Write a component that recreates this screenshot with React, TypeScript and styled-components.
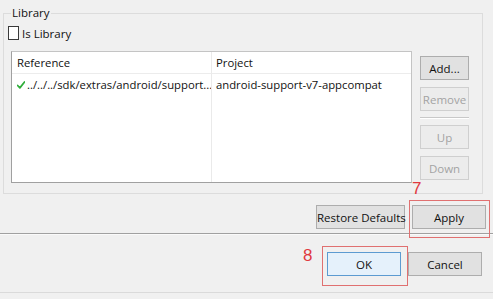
import React from "react";
import styled, { createGlobalStyle } from "styled-components";

const Global = createGlobalStyle`
  html, body { margin: 0; padding: 0; background: #f0f0f0; }
  body { font-family: "Open Sans", "Noto Sans", sans-serif; }
`;

const Window = styled.div`
  width: 493px;
  height: 299px;
  background: #f0f0f0;
  display: flex;
  flex-direction: column;
  overflow: hidden;
  font-family: "Open Sans", "Noto Sans", sans-serif;
  font-size: 11.3px;
  color: #111;
`;

const Group = styled.fieldset`
  margin: 5px 10px 0 3px;
  padding: 0 12px 0 4px;
  border: 1px solid #dcdcdc;
  height: 189px;
  box-sizing: border-box;
  min-width: 0;
  display: flex;
  flex-direction: column;
`;

const Legend = styled.legend`
  padding: 0 1px;
  margin-left: 3px;
  line-height: 16px;
  font-size: 11.5px;
`;

const CheckRow = styled.label`
  display: flex;
  align-items: center;
  gap: 3px;
  height: 16px;
  margin-top: 4px;
  font-size: 11.5px;
`;

const CheckBox = styled.span`
  display: inline-block;
  width: 9px;
  height: 12px;
  border: 1px solid #3a3a3a;
  background: #fff;
`;

const Content = styled.div`
  display: flex;
  gap: 8px;
  margin-top: 10px;
  margin-left: 3px;
`;

const Table = styled.div`
  width: 401px;
  height: 132px;
  box-sizing: border-box;
  background: #fff;
  border: 1px solid #a0a0a0;
  border-top-color: #c4c4c4;
  border-right-color: #c4c4c4;
  display: grid;
  grid-template-columns: 200px 1fr;
  grid-template-rows: 22px 21px 1fr;
`;

const Cell = styled.div<{ $header?: boolean; $first?: boolean }>`
  display: flex;
  align-items: center;
  gap: 2px;
  padding-left: ${(p) => (p.$first ? "5px" : "4px")};
  white-space: nowrap;
  overflow: hidden;
  font-size: 11.3px;
  border-right: ${(p) => (p.$first ? "1px solid #eaeaea" : "none")};
  border-bottom: ${(p) => (p.$header ? "1px solid #ececec" : "none")};
`;

const Check = styled.svg`
  width: 8px;
  height: 8px;
  flex: none;
`;

const SideButtons = styled.div`
  display: flex;
  flex-direction: column;
  gap: 7px;
  padding-top: 5px;
`;

const Sep = styled.div`
  height: 0;
  border-top: 1px solid #c8c8c8;
  border-bottom: 1px solid #fff;
  margin: -1px 0 -1px;
`;

const Button = styled.button<{ $w?: number; $default?: boolean }>`
  width: ${(p) => p.$w ?? 49}px;
  height: 24px;
  padding: 0;
  box-sizing: border-box;
  white-space: nowrap;
  font-family: inherit;
  font-size: 11.5px;
  color: #111;
  background: ${(p) => (p.$default ? "#e5f1fb" : "#e1e1e1")};
  border: 1px solid ${(p) => (p.$default ? "#5c9bd1" : "#adadad")};
  border-radius: 0;
  &:disabled {
    color: #a3a3a3;
    background: #ececec;
    border-color: #cfcfcf;
  }
`;

const ActionRow = styled.div`
  display: flex;
  justify-content: flex-end;
  gap: 7px;
  margin-top: 11px;
  padding-right: 7px;
`;

const Divider = styled.div`
  margin-top: 4px;
  border-top: 1px solid #a0a0a0;
  border-bottom: 1px solid #fafafa;
`;

const BottomRow = styled.div`
  display: flex;
  justify-content: flex-end;
  gap: 7px;
  margin-top: 17px;
  padding-right: 11px;
`;

const Footer = styled.div`
  margin-top: auto;
  margin-bottom: 6px;
  border-top: 1px solid #dadada;
`;

const Annotated = styled.div`
  position: relative;
`;

const RedBox = styled.div<{ $t: number; $r: number; $b: number; $l: number }>`
  position: absolute;
  top: ${(p) => -p.$t}px;
  right: ${(p) => -p.$r}px;
  bottom: ${(p) => -p.$b}px;
  left: ${(p) => -p.$l}px;
  border: 1px solid #e07070;
  pointer-events: none;
`;

const RedNum = styled.span<{ $x: number; $y: number }>`
  position: absolute;
  left: ${(p) => p.$x}px;
  top: ${(p) => p.$y}px;
  color: #e0393e;
  font-family: "Liberation Sans", Arial, sans-serif;
  font-size: 17px;
  line-height: 17px;
`;

export default function App() {
  return (
    <>
      <Global />
      <Window>
        <Group>
          <Legend>Library</Legend>
          <CheckRow>
            <CheckBox />
            Is Library
          </CheckRow>
          <Content>
            <Table>
              <Cell $header $first>Reference</Cell>
              <Cell $header>Project</Cell>
              <Cell $first>
                <Check viewBox="0 0 10 10">
                  <path d="M0.8 5.6 L3.6 8.6 L9.4 1.2" fill="none" stroke="#2fae3a" strokeWidth="2.2" strokeLinecap="round" strokeLinejoin="round" />
                </Check>
                ../../../sdk/extras/android/support...
              </Cell>
              <Cell>android-support-v7-appcompat</Cell>
              <Cell $first />
              <Cell />
            </Table>
            <SideButtons>
              <Button>Add...</Button>
              <Button disabled>Remove</Button>
              <Sep />
              <Button disabled>Up</Button>
              <Button disabled>Down</Button>
            </SideButtons>
          </Content>
        </Group>
        <ActionRow>
          <Button $w={89}>Restore Defaults</Button>
          <Annotated>
            <Button $w={74}>Apply</Button>
            <RedBox $t={5} $r={4} $b={9} $l={3} />
            <RedNum $x={0} $y={-25}>7</RedNum>
          </Annotated>
        </ActionRow>
        <Divider />
        <BottomRow>
          <Annotated>
            <Button $w={74} $default>OK</Button>
            <RedBox $t={6} $r={7} $b={10} $l={5} />
            <RedNum $x={-24} $y={-5}>8</RedNum>
          </Annotated>
          <Button $w={74}>Cancel</Button>
        </BottomRow>
        <Footer />
      </Window>
    </>
  );
}
